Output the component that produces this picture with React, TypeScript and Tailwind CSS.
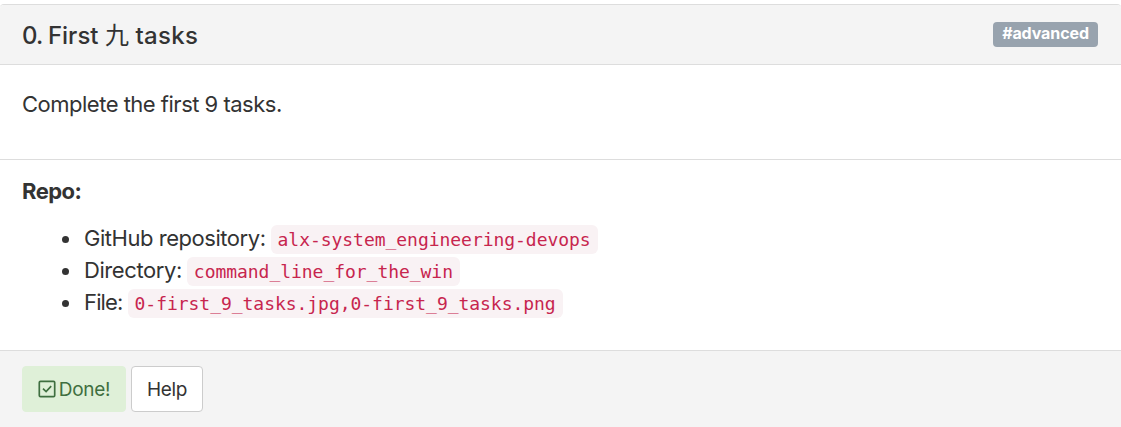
const repoRows = [
  { label: 'GitHub repository:', value: 'alx-system_engineering-devops', tracking: 'tracking-[-0.46px]' },
  { label: 'Directory:', value: 'command_line_for_the_win', tracking: 'tracking-[-0.42px]' },
  { label: 'File:', value: '0-first_9_tasks.jpg,0-first_9_tasks.png', tracking: 'tracking-[-0.85px]' },
];

function CheckSquare() {
  return (
    <svg className="h-[18px] w-[18px]" viewBox="0 0 18 18" fill="none" stroke="currentColor" strokeWidth="1.7">
      <rect x="1.3" y="1.3" width="15.4" height="15.4" rx="1.2" />
      <path d="M5 8.6 8.1 11.5 13.2 6.2" />
    </svg>
  );
}

export default function App() {
  return (
    <div className="h-[427px] overflow-hidden bg-white pt-1 font-['Inter','Noto_Sans_CJK_SC',sans-serif] text-[#333333]">
      <section className="flex h-[440px] flex-col rounded-t border-t border-[#dddddd]">
        <header className="flex h-[60px] shrink-0 items-start justify-between rounded-t border-b border-[#dddddd] bg-[#f4f4f4] pr-[23px] pl-[22px]">
          <h3 className="pt-[14px] text-2xl leading-[34px] font-medium whitespace-nowrap">
            <span className="tracking-[-0.8px]">0. </span>
            <span className="tracking-[0.02px]">First <span className="font-normal">九</span> <span className="tracking-[0.3px]">tasks</span></span>
          </h3>
          <span className="mt-[17px] flex h-[25px] w-[105px] items-center justify-center rounded bg-[#98a3ae] pb-[3px] text-base font-bold tracking-[-0.1px] text-white">
            #advanced
          </span>
        </header>
        <div className="h-[95px] shrink-0 border-b border-[#dddddd] px-[22px] pt-[23px]">
          <p className="text-[22px] leading-8 tracking-[-0.5px] whitespace-nowrap">Complete the first 9 tasks.</p>
        </div>
        <div className="h-[191px] shrink-0 border-b border-[#dddddd] px-[22px] pt-[15px]">
          <p className="text-[22px] leading-8 font-bold tracking-[-0.55px]">Repo:</p>
          <ul className="mt-[15px] text-[22px] leading-8">
            {repoRows.map((row) => (
              <li key={row.label} className="flex h-8 items-center whitespace-nowrap">
                <span className="mt-0.5 mr-[15px] ml-[40px] h-[7px] w-[7px] rounded-full bg-[#333333]" />
                <span className={row.tracking}>{row.label}</span>
                <code className="mt-[3px] ml-[5px] flex h-[29px] items-center rounded-md bg-[#f9f2f4] px-[7px] font-['DejaVu_Sans_Mono',monospace] text-[18px] tracking-[-0.04px] text-[#c7254e]">
                  {row.value}
                </code>
              </li>
            ))}
          </ul>
        </div>
        <footer className="flex grow gap-[5px] bg-[#f4f4f4] px-[22px] pt-[15px]">
          <button className="flex h-[46px] w-[104px] items-center justify-center gap-[3px] rounded border border-[#dff0d8] bg-[#dff0d8] text-[19px] text-[#3f6f40]">
            <CheckSquare />
            <span className="pt-0.5 tracking-[-0.3px]">Done!</span>
          </button>
          <button className="flex h-[46px] w-[72px] items-center justify-center rounded border border-[#cccccc] bg-white pt-0.5 text-[19px] tracking-[-0.4px]">
            Help
          </button>
        </footer>
      </section>
    </div>
  );
}
